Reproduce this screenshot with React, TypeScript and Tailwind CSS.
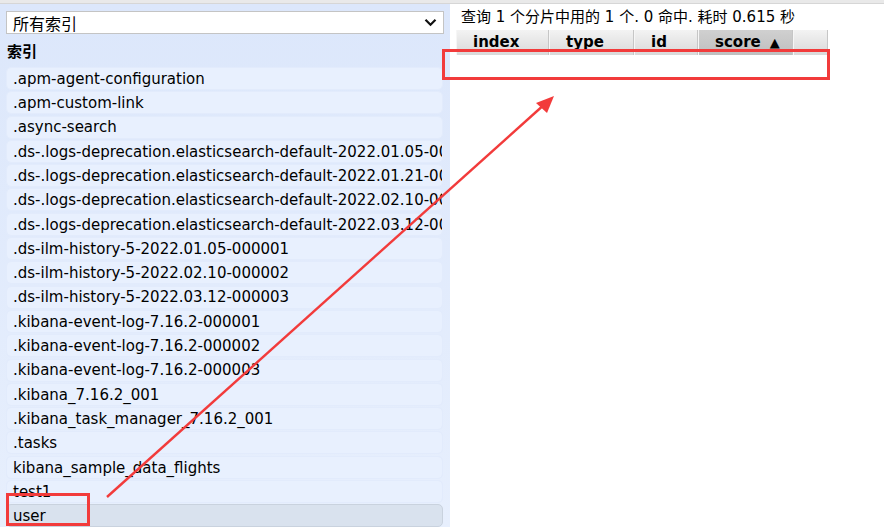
import React from "react";

const indices = [
  ".apm-agent-configuration",
  ".apm-custom-link",
  ".async-search",
  ".ds-.logs-deprecation.elasticsearch-default-2022.01.05-000001",
  ".ds-.logs-deprecation.elasticsearch-default-2022.01.21-000002",
  ".ds-.logs-deprecation.elasticsearch-default-2022.02.10-000003",
  ".ds-.logs-deprecation.elasticsearch-default-2022.03.12-000004",
  ".ds-ilm-history-5-2022.01.05-000001",
  ".ds-ilm-history-5-2022.02.10-000002",
  ".ds-ilm-history-5-2022.03.12-000003",
  ".kibana-event-log-7.16.2-000001",
  ".kibana-event-log-7.16.2-000002",
  ".kibana-event-log-7.16.2-000003",
  ".kibana_7.16.2_001",
  ".kibana_task_manager_7.16.2_001",
  ".tasks",
  "kibana_sample_data_flights",
  "test1",
  "user",
];

const columns = [
  { label: "index", width: "w-[93px]" },
  { label: "type", width: "w-[85px]" },
  { label: "id", width: "w-[64px]" },
  { label: "score", width: "w-[95px]", sorted: true },
  { label: "", width: "w-[35px]" },
];

export default function App() {
  return (
    <div
      className="relative w-[884px] h-[527px] overflow-hidden bg-white text-black flex flex-col"
      style={{ fontFamily: '"DejaVu Sans", Verdana, "Noto Sans CJK SC", sans-serif' }}
    >
      {/* top strip */}
      <div className="h-[4px] shrink-0 bg-[#e9e9e9] border-b border-[#d6d6d6]" />

      <div className="flex flex-1 min-h-0">
        {/* sidebar */}
        <aside className="w-[450px] shrink-0 bg-gradient-to-b from-[#dce7fb] to-[#e7effd] px-[6px] pt-[7px] overflow-hidden">
          <div className="h-[23px] w-[438px] bg-white border border-[#c4c4c4] flex items-center justify-between pl-[6px] pr-[6px]">
            <span className="text-[16px] leading-none" style={{ fontFamily: '"Noto Sans CJK SC", sans-serif' }}>
              所有索引
            </span>
            <svg width="13" height="9" viewBox="0 0 13 9" fill="none">
              <path d="M1.5 1.8 L6.5 6.8 L11.5 1.8" stroke="#111" strokeWidth="2.2" />
            </svg>
          </div>

          <div className="mt-[9px] mb-[8px] pl-[1px] text-[15px] font-bold leading-[16px]" style={{ fontFamily: '"Noto Sans CJK SC", sans-serif' }}>
            索引
          </div>

          <ul className="flex flex-col gap-[1.3px]">
            {indices.map((name) => {
              const selected = name === "user";
              return (
                <li
                  key={name}
                  className={`h-[23px] w-[437px] shrink-0 rounded-[5px] pl-[6px] pt-[1px] flex items-center whitespace-nowrap overflow-hidden text-[15px] ${
                    selected
                      ? "bg-[#d9e2ee] border border-[#c9d2de]"
                      : "bg-[#e8f0fe] border border-[#e2ebfc]"
                  }`}
                >
                  {name}
                </li>
              );
            })}
          </ul>
        </aside>

        {/* results */}
        <main className="flex-1 pl-[6px] pt-[4px]">
          <div className="pl-[5px] text-[15px] leading-[19px]">
            查询 1 个分片中用的 1 个. 0 命中. 耗时 0.615 秒
          </div>
          <div className="flex mt-[3px] h-[25px]">
            {columns.map((c, i) => (
              <div
                key={i}
                className={`${c.width} h-full flex items-center pl-[16px] border-r border-[#c6c6c6] border-l border-l-[#f6f6f6] text-[15px] font-bold bg-gradient-to-b ${
                  c.sorted ? "from-[#d0d0d0] to-[#bfbfbf]" : "from-[#f3f3f3] to-[#d9d9d9]"
                }`}
              >
                {c.label}
                {c.sorted && <span className="ml-[9px] text-[13px]">▲</span>}
              </div>
            ))}
          </div>
        </main>
      </div>

      {/* annotations */}
      <div className="absolute left-[442px] top-[49px] w-[388px] h-[31px] border-[3px] border-[#f23b3b]" />
      <div className="absolute left-[6px] top-[493px] w-[84px] h-[33px] border-[3px] border-[#f23b3b]" />
      <svg className="absolute inset-0 pointer-events-none" width="884" height="527">
        <line x1="107" y1="497" x2="546" y2="103" stroke="#f23b3b" strokeWidth="2.4" />
        <polygon points="554,96 536,103 547,113" fill="#f23b3b" />
      </svg>
    </div>
  );
}
